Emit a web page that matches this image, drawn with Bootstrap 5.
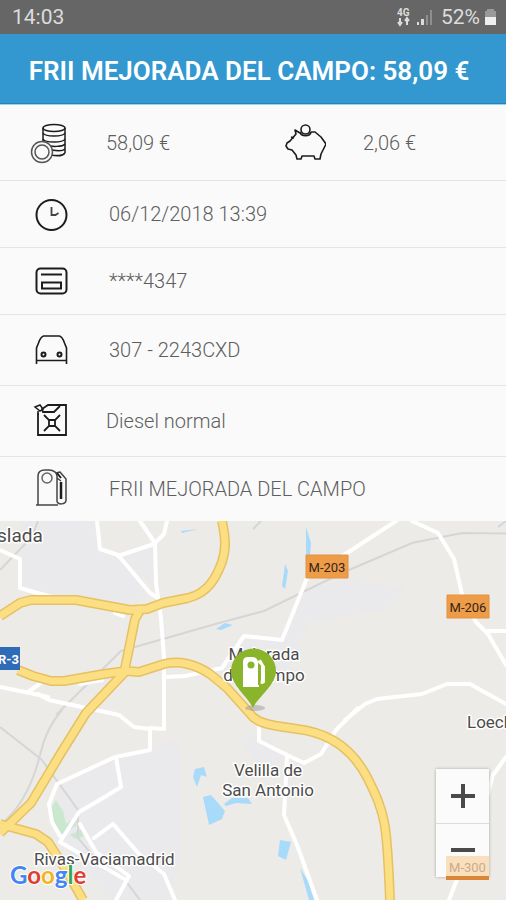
<!DOCTYPE html>
<html lang="es">
<head>
<meta charset="utf-8">
<meta name="viewport" content="width=device-width, initial-scale=1">
<title>FRII MEJORADA DEL CAMPO</title>
<link rel="stylesheet" href="https://cdn.jsdelivr.net/npm/bootstrap@5.3.0/dist/css/bootstrap.min.css">
<style>
body { font-family: Roboto, "Liberation Sans", sans-serif; background: #fafafa; color: #5e5e5e; font-size: 20px; line-height: 24px; }
.status-bar { background: #666; color: #dcdcdc; height: 34px; padding: 0 9px 0 12px; font-size: 21px; }
.title-bar { background: #3398cf; color: #fff; height: 70px; padding: 4px 8px 0 0; border-bottom: 1px solid #2585bb; }
.title-bar h1 { font-size: 26px; line-height: 32px; font-weight: 600; }
.detail-list { border-top: 1px solid #9dd2ee; font-weight: 300; }
.detail { min-height: 67px; border-bottom: 1px solid #e4e4e4; }
.detail-first { min-height: 76px; }
.detail-mid { min-height: 71px; }
.detail-last { border-bottom: 0; min-height: 64px; }
.icon-cell { width: 109px; padding-left: 29px; flex: none; }
.icon-cell.narrow { width: 106px; }
.icon-cell svg, .saving-icon svg { display: block; fill: none; stroke: #1c1c1c; stroke-width: 2; }
.saving-icon { width: 110px; padding-left: 31px; flex: none; }
.map-area { min-height: 379px; background: #edebe8; }
.map-area .map-canvas { display: block; width: 100%; height: 100%; position: absolute; top: 0; left: 0; }
.map-canvas text { font-family: Roboto, "Liberation Sans", sans-serif; }
.map-canvas .brand { font-family: Lato, "Liberation Sans", sans-serif; font-size: 24px; font-weight: 700; stroke: #fff; stroke-width: 2px; paint-order: stroke; }
.place { font-size: 17px; fill: #4c4c4c; stroke: #fff; stroke-width: 3px; paint-order: stroke; stroke-linejoin: round; }
.place .town { font-size: 19px; }
.zoom-box { position: absolute; right: 17px; bottom: 23px; width: 53px; box-shadow: 0 0 3px rgba(0,0,0,.3); }
.zoom-box button { height: 54px; background: #fbfbfb; border: 0; border-radius: 0; }
.zoom-box button + button { border-top: 1px solid #ddd; }
.covered-sign { position: absolute; right: 17px; bottom: 20px; width: 43px; height: 24px; background: #fadfbd; border-bottom: 4px solid #d98736; color: #c9ab8b; font-size: 13px; line-height: 24px; pointer-events: none; }
</style>
</head>
<body>
<div class="d-flex flex-column min-vh-100">
<div class="status-bar d-flex align-items-center justify-content-between">
  <span>14:03</span>
  <span class="d-flex align-items-center gap-2">
    <svg width="36" height="20" viewBox="0 0 36 20" role="img" aria-label="4G">
      <text x="0" y="9" font-size="10" font-weight="700" fill="#dcdcdc">4G</text>
      <path d="M3 11v6M1 15l2 3 2-3M10 18v-6M8 14l2-3 2 3" fill="none" stroke="#dcdcdc" stroke-width="2"/>
      <path d="M20 15h2v3h-2zM24 12h3v6h-3z" fill="#dcdcdc"/><path d="M29 8h2v10h-2zM33 3h2v15h-2z" fill="#8f8f8f"/>
    </svg>
    <span class="d-flex align-items-center gap-1">52%
    <svg width="13" height="20" viewBox="0 0 13 20" aria-hidden="true"><path d="M3 2h7v2h2v7H1V4h2z" fill="#999"/><path d="M1 10h11v8H1z" fill="#eee"/></svg></span>
  </span>
</div>
<header class="title-bar d-flex align-items-center justify-content-center text-nowrap">
  <h1 class="m-0">FRII MEJORADA DEL CAMPO: 58,09 €</h1>
</header>
<main class="d-flex flex-column flex-grow-1">
<div class="detail-list">
  <div class="detail detail-first d-flex">
    <div class="d-flex align-items-center w-50">
      <span class="icon-cell narrow"><svg width="42" height="44" viewBox="0 0 42 44" aria-hidden="true">
        <g stroke-width="1.500"><ellipse cx="25" cy="7" rx="11" ry="3.500"/><path d="M14 7v16M36 7v25"/><path d="M14 12c2 4 20 4 22 0M14 18c2 4 20 4 22 0M17 24c5 2 17 2 19-1M23 29c5 1 11 1 13-1M22 34c5 1 12 1 14-2"/></g>
        <g stroke="#555" stroke-width="1.500"><circle cx="13" cy="31" r="10.500" fill="#fafafa"/><circle cx="13" cy="31" r="7"/></g></svg></span>
      <span>58,09 €</span>
    </div>
    <div class="d-flex align-items-center w-50">
      <span class="saving-icon"><svg width="42" height="38" viewBox="0 0 42 38" stroke-linejoin="round" aria-hidden="true">
        <g stroke-width="1.600"><path d="M16 9l-5-3 1 4-6 7-3 2-1 3 2 3 4 1 4 5 1 4h4l1-3h12l1 3h5l1-5 5-10-5-7-6-5h-4"/><path d="M16 8c1 5 10 5 11 0M7 13l3 1"/><circle cx="21.500" cy="5.500" r="4.500"/></g></svg></span>
      <span>2,06 €</span>
    </div>
  </div>
  <div class="detail d-flex align-items-center">
    <span class="icon-cell"><svg width="44" height="44" viewBox="0 0 44 44" aria-hidden="true"><circle cx="22.500" cy="23" r="15"/><path d="M22.500 15v8h4l3-2" stroke="#444" stroke-width="1.800"/></svg></span>
    <span>06/12/2018 13:39</span>
  </div>
  <div class="detail d-flex align-items-center">
    <span class="icon-cell"><svg width="44" height="44" viewBox="0 0 44 44" aria-hidden="true"><rect x="7.500" y="9.500" width="30" height="25" rx="4"/><path d="M12 15.500h21M13 23.500h19v6H13z"/></svg></span>
    <span>****4347</span>
  </div>
  <div class="detail detail-mid d-flex align-items-center">
    <span class="icon-cell"><svg width="44" height="44" viewBox="0 0 44 44" aria-hidden="true"><path d="M7.500 36V20l2-5q2-6 5-7h16q3 1 5 7l2 5v16M8 32.500h29" stroke-width="1.600"/><circle cx="14.500" cy="26.500" r="2"/><circle cx="30.500" cy="26.500" r="2"/></svg></span>
    <span>307 - 2243CXD</span>
  </div>
  <div class="detail detail-mid d-flex align-items-center">
    <span class="icon-cell narrow"><svg width="44" height="44" viewBox="0 0 44 44" aria-hidden="true"><path d="M9 14v22h28V6H19l-6 4 1 3h11l6-6" stroke-width="1.800"/><path d="M6 8l5 4 3-2-3-4zM9 12v4" stroke-width="1.500"/><path d="M15 16l5 5v6l-5 5M31 16l-5 5v6l5 5M20 21h6M20 27h6" stroke-width="1.800"/></svg></span>
    <span>Diesel normal</span>
  </div>
  <div class="detail detail-last d-flex align-items-center">
    <span class="icon-cell"><svg width="44" height="44" viewBox="0 0 44 44" stroke-linejoin="round" aria-hidden="true"><path d="M7 38h22M9 38V9c0-4 3-6 7-6h4c5 0 8 3 8 6v25c0 4 9 4 9-1V12l-6-7-4 1M28 11l4 3" stroke="#444" stroke-width="1.500"/><path d="M32 15v17" stroke-width="2.500"/><circle cx="18" cy="11" r="5" stroke="#666" stroke-width="1.500"/><path d="M28 6l4 5" stroke-width="2"/></svg></span>
    <span>FRII MEJORADA DEL CAMPO</span>
  </div>
</div>
<section class="map-area position-relative overflow-hidden flex-grow-1" aria-label="Mapa">
  <svg class="map-canvas" viewBox="0 521 506 379" preserveAspectRatio="xMidYMin slice">
    <!-- built-up areas -->
    <g fill="#eae9eb">
      <path d="M22 521h75l6 28 15 6 32 38-22 12-50-7-57-10z"/><path d="M120 555l34-12v43z"/>
      <path d="M284 640l22-50 40-10 60 8-20 22-78 12-18 45-30 17-30-20 2-23z"/>
      <path d="M60 785l56-28 65-18v120l-14 41h-55l-53-60z"/><path d="M237 735l38 5 6 22-20 10z"/>
    </g>
    <g fill="#c9e8cf"><path d="M56 800l7 11 3 13 9-6-4 10-14 2-8-19zM58 829l20-13-2 10-14 8zM70 835l11-6 3 7-8 3z"/></g>
    <g fill="#a8daf9"><path d="M193 777l2-8 9-2 3 10-6-2-4 12zM203 797l8-2 14 16-3 8-13 6zM224 804l8-6h16l4 6-16-1-10 3zM306 527l5 16-1 12h-4zM285 564l3 7-3 18-3-3zM181 531l17-2-16 4zM216 629l9-6 8 2-12 5zM280 840l11 2-5 18-8-4zM300 868l8 13 6 19h-5z"/></g>
    <!-- railways and minor tracks -->
    <g fill="none" stroke="#d6d6d6" stroke-width="2">
      <path d="M0 570l32-33 6-16M56 715l65-64 28-8 70-20 45-12 78-38 70-30 50-10 80 1M62 710q-16 18-22 45-12 48-40 70M0 727l42 33 36 50 0 28 26 31 20 10 16 21M253 529l8-8M506 521l-8 6"/>
    </g>
    <!-- secondary roads -->
    <g fill="none" stroke="#fff" stroke-width="4" stroke-linejoin="round" stroke-linecap="round">
      <path d="M0 550l20 9v29l35 10M97 521l3 28 18 6 32 38 8 5M118 556l36-12 10-10 3-13M140 521l15 22 1 40 5 35 3 40v71l-14-1v22l-35 7-58 27-8 20 3 18 8 14M0 687l25 5 23 5M28 692l17-12M38 694l11 6 70 15 15 12 16 2M116 757l5 30-18 11-24 14-19 30 66 38M80 824l16 28 33 24-13 24M94 838l19-14 26 30 25 20 11 26"/>
      <path d="M396 521l-49 32-40 25-25 62-38-4-22 32-37 8-19 1M412 521l26 12 16 26 8 35 14 28 12 12 18 31M488 631h18M345 720l20-16 12-5 45-5 25-10 23 0 36 20M358 708l-22 22-15 24-17 9-17-8-28-14v-23M287 757l-3 58 13 30 20 55M506 757l-13 18-11 40-33 85M115 613l8 3M80 684l22-4"/>
    </g>
    <!-- motorways: outline, then fill -->
    <defs><path id="motorways" d="M0 616l20-13 11-3h45l54 10 17-1 16-6 25-5c20-5 28-20 34-36 4-13 4-22 0-41M142 607l-7 12-11 54-38 40-25 40-30 50L0 833M18 670l15 6 18 5h13l40-7 22-3 13 1 25-8c14-4 31 0 46 10l17 14 26 29c9 8 24 9 44 12 35 4 57 22 71 50 18 36 19 45 22 121M0 824l36 10 12 8 18 28 17 30"/></defs>
    <g fill="none" stroke-linejoin="round">
      <use href="#motorways" stroke="#e6c163" stroke-width="10"/>
      <use href="#motorways" stroke="#fbdf82" stroke-width="7"/>
    </g>
    <g class="place">
      <text x="-3" y="542" class="town">slada</text>
      <text x="264" y="660" text-anchor="middle">Mejorada</text><text x="264" y="681" text-anchor="middle">del Campo</text>
      <text x="268" y="776" text-anchor="middle">Velilla de</text><text x="268" y="796" text-anchor="middle">San Antonio</text>
      <text x="467" y="728">Loeches</text><text x="34" y="865">Rivas-Vaciamadrid</text>
    </g>
    <path d="M0 647h20v23H0z" fill="#2e6cb8"/><text x="-2" y="664" font-size="13" font-weight="700" fill="#fff">R-3</text>
    <g fill="#ee9c47" stroke="#e2923f"><path d="M306 555h42v23h-42zM447 595h42v23h-42z"/></g>
    <g font-size="13" fill="#33261a" text-anchor="middle"><text x="327" y="572">M-203</text><text x="468" y="612">M-206</text></g>
    <!-- fuel station pin -->
    <ellipse cx="255" cy="708" rx="10" ry="3" fill="#999" opacity=".5"/>
    <path d="M253 708c-5-11-22-23-22-37a22 22 0 0 1 45 0c0 14-18 26-23 37z" fill="#8ab52b"/>
    <path d="M243 686v-24q0-5 5-5h4q6 0 6 6v22h1v2h-16z" fill="#fff"/><circle cx="251" cy="665" r="3.500" fill="#8ab52b"/>
    <path d="M258 661l4 4v15q-2 5 2 2V667l-4-7M261 681q3 2 3-3v-12" fill="none" stroke="#fff" stroke-width="2"/>
    <text x="10" y="884" class="brand"><tspan fill="#4285f4">G</tspan><tspan fill="#df3f32">o</tspan><tspan fill="#f2b51c">o</tspan><tspan fill="#4285f4">g</tspan><tspan fill="#34a853">l</tspan><tspan fill="#df3f32">e</tspan></text>
  </svg>
  <div class="zoom-box d-flex flex-column">
    <button type="button" class="p-0 w-100" aria-label="Acercar"><svg width="26" height="26" viewBox="0 0 26 26" aria-hidden="true"><path d="M1 13h24M13 1v24" stroke="#4a4a4a" stroke-width="4"/></svg></button>
    <button type="button" class="p-0 w-100" aria-label="Alejar"><svg width="26" height="26" viewBox="0 0 26 26" aria-hidden="true"><path d="M1 12h24" stroke="#4a4a4a" stroke-width="4"/></svg></button>
  </div>
  <span class="covered-sign text-center">M-300</span>
</section>
</main>
</div>
<script src="https://cdn.jsdelivr.net/npm/bootstrap@5.3.0/dist/js/bootstrap.bundle.min.js"></script>
</body>
</html>
